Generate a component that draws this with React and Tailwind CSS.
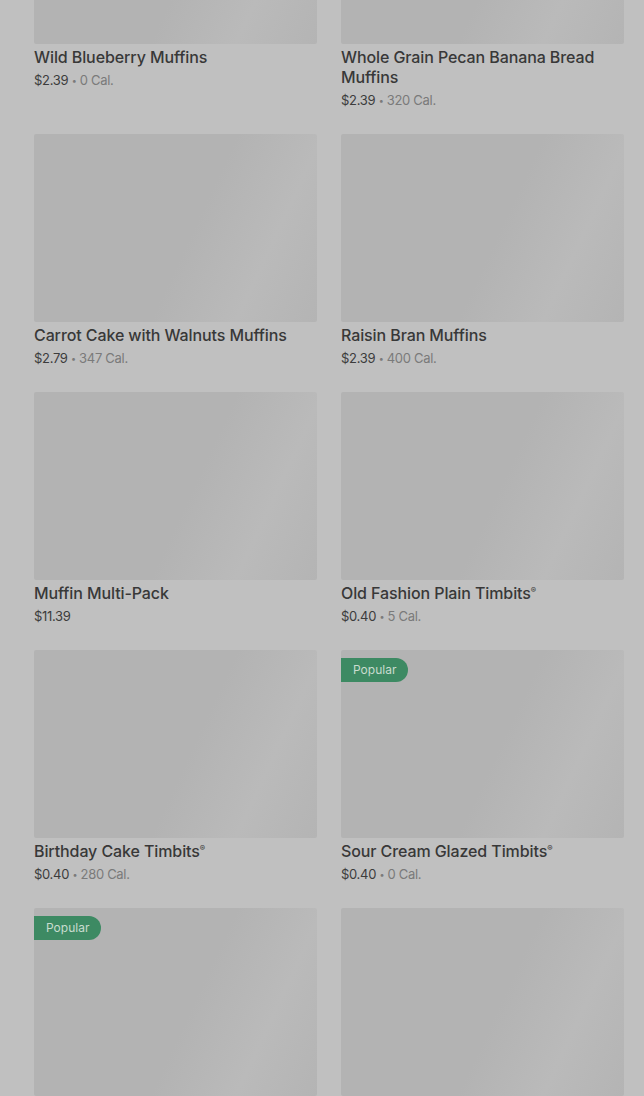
const ITEMS = [
  { name: "Wild Blueberry Muffins", price: "$2.39", cal: "0 Cal." },
  { name: "Whole Grain Pecan Banana Bread Muffins", price: "$2.39", cal: "320 Cal." },
  { name: "Carrot Cake with Walnuts Muffins", price: "$2.79", cal: "347 Cal." },
  { name: "Raisin Bran Muffins", price: "$2.39", cal: "400 Cal." },
  { name: "Muffin Multi-Pack", price: "$11.39" },
  { name: "Old Fashion Plain Timbits®", price: "$0.40", cal: "5 Cal." },
  { name: "Birthday Cake Timbits®", price: "$0.40", cal: "280 Cal." },
  { name: "Sour Cream Glazed Timbits®", price: "$0.40", cal: "0 Cal.", popular: true },
  { name: "", price: "", popular: true },
  { name: "", price: "" },
];

function Card({ item }) {
  return (
    <div>
      <div className="relative h-[188px] rounded-[2px] bg-[linear-gradient(115deg,#b3b3b3_0%,#b3b3b3_55%,#bababa_78%,#b4b4b4_100%)]">
        {item.popular && (
          <span className="absolute left-0 top-2 h-6 pl-3 pr-3 rounded-r-full bg-[#3d8a63] text-[12px] leading-6 text-[#c9dccf]">
            Popular
          </span>
        )}
      </div>
      {item.name && (
        <>
          <div className="mt-[3px] text-[16px] leading-5 font-medium text-[#383838] tracking-[-0.1px]">
            {item.name.replace("®", "")}
            {item.name.includes("®") && <span className="text-[8px] leading-none align-[6px]">®</span>}
          </div>
          <div className="mt-1 h-[18px] text-[13px] leading-[18px] tracking-[-0.3px]">
            <span className="text-[#3c3c3c]">{item.price}</span>
            {item.cal && (
              <span className="text-[#7a7a7a]">
                {" "}<span className="text-[9px] leading-none align-[1px]">•</span> {item.cal}
              </span>
            )}
          </div>
        </>
      )}
    </div>
  );
}

export default function App() {
  return (
    <div
      className="h-[1096px] overflow-hidden bg-[#c0c0c0]"
      style={{ fontFamily: "Inter, 'Noto Sans', sans-serif" }}
    >
      <div className="-mt-[144px] pl-[34px] pr-5 grid grid-cols-2 gap-x-6 gap-y-[25px]">
        {ITEMS.map((item, i) => (
          <Card key={i} item={item} />
        ))}
      </div>
    </div>
  );
}
